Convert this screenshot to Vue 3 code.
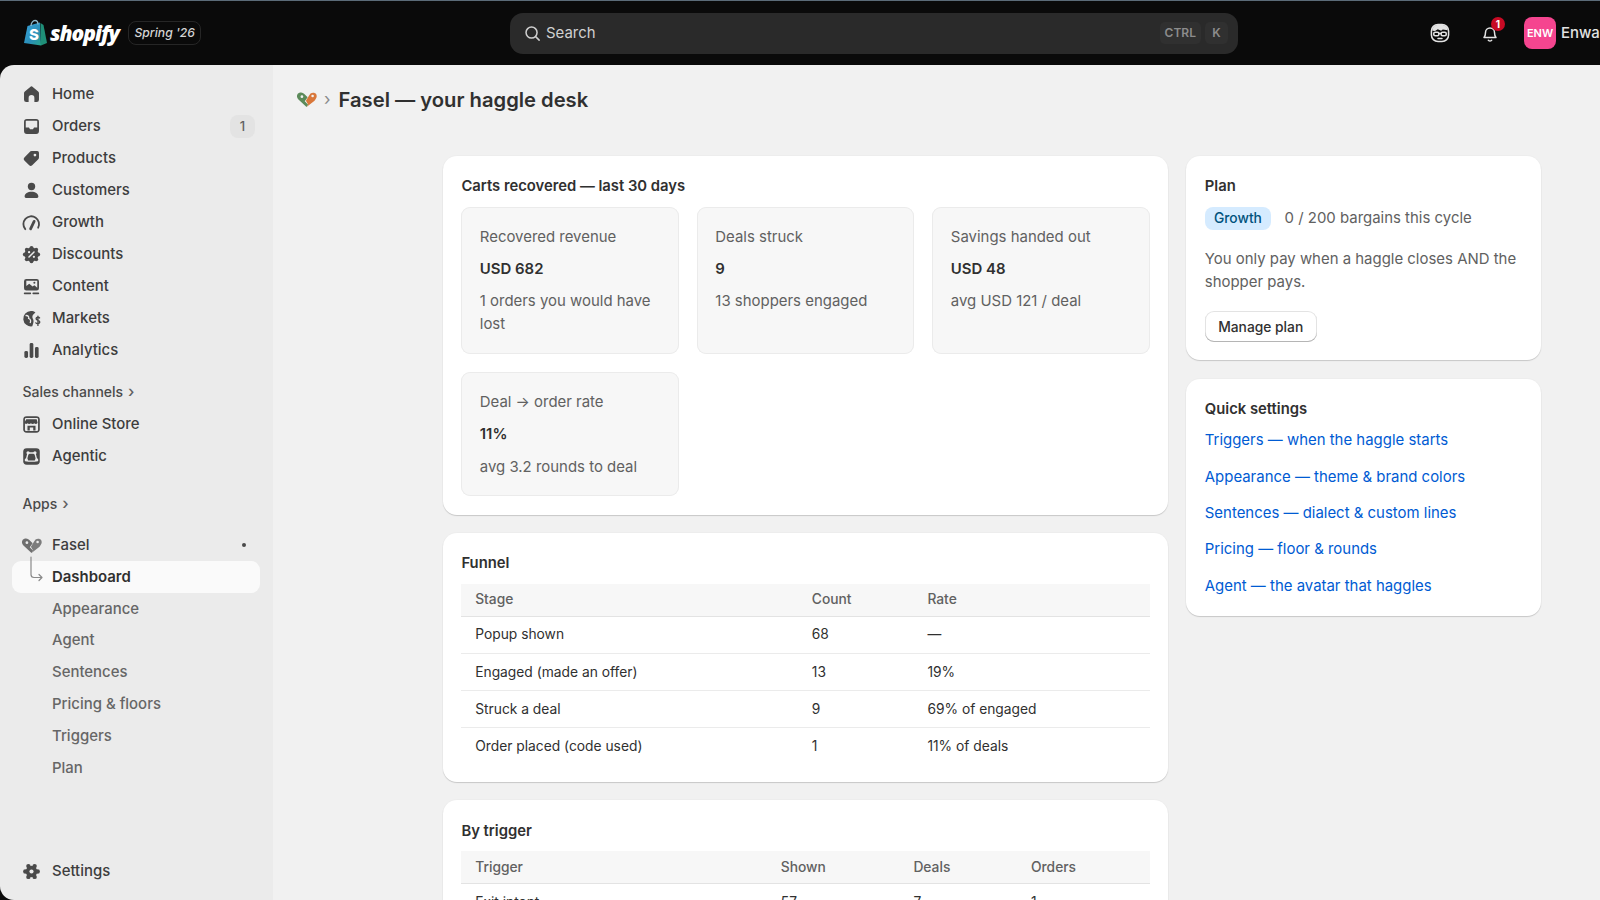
<template>
  <div class="admin">
    <!-- top bar -->
    <header class="topbar">
      <div class="brand">
        <svg class="bag" viewBox="0 0 24 28">
          <defs>
            <linearGradient id="bagGrad" x1="0" y1="0" x2="1" y2="1">
              <stop offset="0" stop-color="#3aa3dc" />
              <stop offset="0.6" stop-color="#2a8fb8" />
              <stop offset="1" stop-color="#27a58a" />
            </linearGradient>
          </defs>
          <path d="M1 24 L4.500 7 L17 3.500 L18 26.500z" fill="url(#bagGrad)" />
          <path d="M17.500 4 L20.500 6 L24 24 L18 26.500z" fill="#1f8f78" />
          <path d="M8 7c0-3 2-5.500 4-5.500s3 2 3 4" fill="none" stroke="#8fb7c9" stroke-width="1.300" />
          <text x="6" y="21" class="bag-s">S</text>
        </svg>
        <span class="wordmark">shopify</span>
        <span class="edition">Spring '26</span>
      </div>
      <div class="search">
        <svg class="search-icon" viewBox="0 0 20 20">
          <circle cx="9" cy="9" r="5.800" />
          <path d="M13.300 13.300 L17 17" />
        </svg>
        <span class="search-text">Search</span>
        <span class="kbd">CTRL</span>
        <span class="kbd">K</span>
      </div>
      <div class="top-actions">
        <svg class="face" viewBox="0 0 20 20">
          <rect x="2.200" y="2.200" width="15.600" height="15.600" rx="6" />
          <path d="M3 8 C3 4 6 2.500 10 2.500 C14 2.500 17 4 17 7.500 L12.500 6.800 L11 8 L8 6.500 L5.500 8.200z" class="hair" />
          <rect x="4.300" y="9.300" width="4.700" height="3.200" rx="1.300" />
          <rect x="11" y="9.300" width="4.700" height="3.200" rx="1.300" />
          <path d="M9 10.500 h2 M8.200 15 h3.600" />
        </svg>
        <div class="bell-wrap">
          <svg class="bell" viewBox="0 0 20 20">
            <path d="M4 14.500 c1.200-1.300 1.500-2.500 1.500-5 a4.500 4.500 0 0 1 9 0 c0 2.500 .3 3.700 1.500 5z" />
            <path d="M8 16.800 a2.200 2.200 0 0 0 4 0" />
          </svg>
          <span class="bell-badge">1</span>
        </div>
        <span class="avatar">ENW</span>
        <span class="store-name">Enwar</span>
      </div>
    </header>

    <div class="shell">
      <!-- left nav -->
      <aside class="sidebar">
        <a v-for="item in mainNav" :key="item.label" class="nav-row">
          <svg class="nav-icon" viewBox="0 0 20 20" v-html="icons[item.icon]"></svg>
          <span class="nav-label">{{ item.label }}</span>
          <span v-if="item.count" class="nav-count">{{ item.count }}</span>
        </a>

        <div class="nav-heading first">Sales channels <span class="chev">›</span></div>
        <a v-for="item in channelNav" :key="item.label" class="nav-row">
          <svg class="nav-icon" viewBox="0 0 20 20" v-html="icons[item.icon]"></svg>
          <span class="nav-label">{{ item.label }}</span>
        </a>

        <div class="nav-heading second">Apps <span class="chev">›</span></div>
        <a class="nav-row app-row">
          <svg class="nav-icon" viewBox="0 0 20 20" v-html="heartGray"></svg>
          <span class="nav-label">Fasel</span>
          <span class="app-dot"></span>
        </a>
        <a class="nav-row selected">
          <svg class="nav-icon connector" viewBox="0 0 23 23">
            <path d="M11 -9 V8.500 a3 3 0 0 0 3 3 H22 M19 8.500 l3 3 -3 3" />
          </svg>
          <span class="nav-label">Dashboard</span>
        </a>
        <a v-for="label in appNav" :key="label" class="nav-row sub-row">
          <span class="nav-icon"></span>
          <span class="nav-label">{{ label }}</span>
        </a>

        <a class="nav-row settings">
          <svg class="nav-icon" viewBox="0 0 20 20" v-html="icons.settings"></svg>
          <span class="nav-label">Settings</span>
        </a>
      </aside>

      <main class="main">
        <div class="page-head">
          <svg class="head-logo" viewBox="0 0 20 20" v-html="heartColor"></svg>
          <span class="crumb">›</span>
          <h1>Fasel — your haggle desk</h1>
        </div>

        <div class="columns">
          <div class="col-main">
            <section class="card">
              <h2>Carts recovered — last 30 days</h2>
              <div class="stats">
                <div v-for="s in stats" :key="s.label" class="stat">
                  <div class="stat-label">{{ s.label }}</div>
                  <div class="stat-value">{{ s.value }}</div>
                  <div class="stat-label">{{ s.sub }}</div>
                </div>
              </div>
            </section>

            <section class="card">
              <h2>Funnel</h2>
              <table class="funnel">
                <thead>
                  <tr><th>Stage</th><th>Count</th><th>Rate</th></tr>
                </thead>
                <tbody>
                  <tr v-for="r in funnel" :key="r[0]">
                    <td v-for="c in r" :key="c">{{ c }}</td>
                  </tr>
                </tbody>
              </table>
            </section>

            <section class="card">
              <h2>By trigger</h2>
              <table class="triggers">
                <thead>
                  <tr><th>Trigger</th><th>Shown</th><th>Deals</th><th>Orders</th></tr>
                </thead>
                <tbody>
                  <tr><td>Exit intent</td><td>57</td><td>7</td><td>1</td></tr>
                  <tr><td>Idle on cart</td><td>11</td><td>2</td><td>0</td></tr>
                </tbody>
              </table>
            </section>
          </div>

          <div class="col-side">
            <section class="card">
              <h2>Plan</h2>
              <div class="plan-row">
                <span class="plan-badge">Growth</span>
                <span class="muted">0 / 200 bargains this cycle</span>
              </div>
              <p class="muted plan-note">You only pay when a haggle closes AND the shopper pays.</p>
              <button class="btn">Manage plan</button>
            </section>

            <section class="card">
              <h2>Quick settings</h2>
              <div class="links">
                <a v-for="l in quickLinks" :key="l" class="link">{{ l }}</a>
              </div>
            </section>
          </div>
        </div>
      </main>
    </div>
  </div>
</template>

<script setup>
// nav items
const mainNav = [
  { label: "Home", icon: "home" },
  { label: "Orders", icon: "orders", count: 1 },
  { label: "Products", icon: "products" },
  { label: "Customers", icon: "customers" },
  { label: "Growth", icon: "growth" },
  { label: "Discounts", icon: "discounts" },
  { label: "Content", icon: "content" },
  { label: "Markets", icon: "markets" },
  { label: "Analytics", icon: "analytics" },
];
const channelNav = [
  { label: "Online Store", icon: "store" },
  { label: "Agentic", icon: "agentic" },
];
const appNav = ["Appearance", "Agent", "Sentences", "Pricing & floors", "Triggers", "Plan"];

const stats = [
  { label: "Recovered revenue", value: "USD 682", sub: "1 orders you would have lost" },
  { label: "Deals struck", value: "9", sub: "13 shoppers engaged" },
  { label: "Savings handed out", value: "USD 48", sub: "avg USD 121 / deal" },
  { label: "Deal → order rate", value: "11%", sub: "avg 3.2 rounds to deal" },
];

const funnel = [
  ["Popup shown", "68", "—"],
  ["Engaged (made an offer)", "13", "19%"],
  ["Struck a deal", "9", "69% of engaged"],
  ["Order placed (code used)", "1", "11% of deals"],
];

const quickLinks = [
  "Triggers — when the haggle starts",
  "Appearance — theme & brand colors",
  "Sentences — dialect & custom lines",
  "Pricing — floor & rounds",
  "Agent — the avatar that haggles",
];

// small helper for the fasel mark, two tags making a heart
const heart = (left, right, hole) => `
  <path d="M10 16.500 L3 10 C1 8 1.500 5 3.800 4.200 C6 3.500 7.500 4.500 9 6 L11 8 L8.500 11.500 L11.500 14.500z" fill="${left}"/>
  <path d="M10 16.500 L11.500 14.500 L9.500 11 L12 7 L13.500 4.800 C15 3.800 17.500 3.800 18.500 5.500 C19.500 7.500 18.500 9 17 11z" fill="${right}"/>
  <circle cx="6" cy="7.500" r="1.200" fill="${hole}"/>
  <circle cx="15.300" cy="7" r="1.100" fill="${hole}"/>`;
const heartGray = heart("#6f6f6f", "#7c7c7c", "#ebebeb");
const heartColor = heart("#5c8a5a", "#d9773a", "#f1f1f1");

const ring = (n, dist, r) =>
  Array.from({ length: n }, (_, i) => {
    const a = (i * 2 * Math.PI) / n;
    return `<circle cx="${10 + dist * Math.cos(a)}" cy="${10 + dist * Math.sin(a)}" r="${r}"/>`;
  }).join("");

const icons = {
  home: `<path d="M8.900 3.400a1.700 1.700 0 0 1 2.200 0l4.700 3.900a2 2 0 0 1 .7 1.500v5.700a2 2 0 0 1-2 2h-2v-3.500a2.500 2.500 0 0 0-5 0v3.500h-2a2 2 0 0 1-2-2V8.800a2 2 0 0 1 .7-1.500z"/>`,
  orders: `<path fill-rule="evenodd" d="M6 3.500h8a2.500 2.500 0 0 1 2.500 2.500v8a2.500 2.500 0 0 1-2.500 2.500H6A2.500 2.500 0 0 1 3.500 14V6A2.500 2.500 0 0 1 6 3.500zM5.500 5h9a.5.5 0 0 1 .5.5v5.300h-2.800l-.9 1.500H8.700l-.9-1.500H5V5.500a.5.500 0 0 1 .5-.5z"/>`,
  products: `<path fill-rule="evenodd" d="M10.800 3.500h4.200a1.500 1.500 0 0 1 1.500 1.500v4.200a2 2 0 0 1-.6 1.400l-5.300 5.300a1.800 1.800 0 0 1-2.600 0l-4.200-4.200a1.800 1.800 0 0 1 0-2.600l5.300-5.300a2 2 0 0 1 1.700-.3zM13 5.800a1.200 1.200 0 1 0 0 2.400 1.200 1.200 0 0 0 0-2.400z"/>`,
  customers: `<circle cx="10" cy="6.500" r="3.200"/><path d="M4 15.300c0-2.900 2.800-4.300 6-4.300s6 1.400 6 4.300a1.200 1.200 0 0 1-1.200 1.200H5.200A1.200 1.200 0 0 1 4 15.300z"/>`,
  growth: `<path d="M4.600 15.800A6.800 6.800 0 1 1 15.800 14.500" fill="none" stroke="#4a4a4a" stroke-width="1.600" stroke-linecap="round"/><path d="M9.200 15.500 L12.300 9" stroke="#4a4a4a" stroke-width="2.400" stroke-linecap="round"/>`,
  discounts: `<circle cx="10" cy="10" r="6"/>${ring(8, 5.8, 1.7)}<path d="M7.800 12.200 L12.200 7.800" stroke="#ebebeb" stroke-width="1.300" stroke-linecap="round"/><circle cx="7.900" cy="8" r="1" fill="#ebebeb"/><circle cx="12.100" cy="12" r="1" fill="#ebebeb"/>`,
  content: `<path fill-rule="evenodd" d="M5.500 3.500h9a2 2 0 0 1 2 2v6a2 2 0 0 1-2 2h-9a2 2 0 0 1-2-2v-6a2 2 0 0 1 2-2zM5.500 5v4.500l2.500-2 3 2.500 1.500-1 2.500 2V5z"/><circle cx="12.500" cy="6.800" r=".9"/><path d="M4 16h5M11.500 16h4.500" fill="none" stroke="#4a4a4a" stroke-width="1.400" stroke-linecap="round"/>`,
  markets: `<path d="M9.500 3.500c1.500 0 2.800.4 3.900 1.200l-1.400 1.300c-1.700 1.600-1.400 3.200-.7 4.500.6 1.200.6 2.400.2 3.600l-.8 2.700a6.700 6.700 0 1 1-1.200-13.300z"/><path d="M4.800 7.500 C7 7 8 8.500 7.500 10 C9.500 10.500 9.500 12.500 8.800 14" fill="none" stroke="#ebebeb" stroke-width="1.100"/><path d="M17 9.500c-.6-.9-3-.9-3 .8 0 1.800 3.200 1 3.200 2.800 0 1.700-2.600 1.700-3.400.7M15.600 8v8" fill="none" stroke="#4a4a4a" stroke-width="1.200" stroke-linecap="round"/>`,
  analytics: `<rect x="3.800" y="10.500" width="3.200" height="6" rx="1.300"/><rect x="8.400" y="3.500" width="3.200" height="13" rx="1.300"/><rect x="13" y="7" width="3.200" height="9.500" rx="1.300"/>`,
  store: `<rect x="2.800" y="2.800" width="14.400" height="14.400" rx="3"/><rect x="4.300" y="4.300" width="11.400" height="11.400" rx="1" fill="#ebebeb"/><path d="M5.500 5.500h9l.8 3c-.5 1.300-2.200 1.300-2.800.4-.7.9-2.300.9-3 0-.7.9-2.300.9-3 0-.6.9-2.300.9-2.800-.4z"/><path d="M6.500 11h7v4.200h-2v-2.700h-3v2.700h-2z"/>`,
  agentic: `<rect x="2.800" y="2.800" width="14.400" height="14.400" rx="3"/><path d="M7 7h6l1.500 6-1.500 1H7l-1.500-1z" fill="none" stroke="#ebebeb" stroke-width="1.200"/><circle cx="7" cy="6.800" r="1.400" fill="#ebebeb"/><circle cx="13" cy="6.800" r="1.400" fill="#ebebeb"/><circle cx="5.500" cy="13" r="1.400" fill="#ebebeb"/><circle cx="14.500" cy="13" r="1.400" fill="#ebebeb"/>`,
  settings: `<circle cx="10" cy="10" r="5"/>${ring(6, 5.4, 1.900)}<circle cx="10" cy="10" r="1.800" fill="#ebebeb"/>`,
};
</script>

<style>
html, body {
  margin: 0;
  overflow: hidden;
  background: #0a0a0a;
}
</style>

<style scoped>
.admin {
  width: 1600px;
  height: 900px;
  overflow: hidden;
  font-family: Inter, "Noto Sans", sans-serif;
  font-size: 14.95px;
  line-height: 23px;
  color: #303030;
  background: #0a0a0a;
  display: flex;
  flex-direction: column;
}

/* top bar */
.topbar {
  flex: none;
  border-top: 1px solid #5b6b78;
  height: 64px;
  display: flex;
  align-items: center;
  white-space: nowrap;
}
.brand {
  width: 510px;
  flex: none;
  display: flex;
  align-items: center;
  box-sizing: border-box;
  padding-left: 23px;
}
.bag {
  width: 24px;
  height: 28px;
}
.bag-s {
  font-family: Inter, sans-serif;
  font-size: 15px;
  font-weight: 800;
  fill: #fff;
}
.wordmark {
  font-family: "Open Sans", sans-serif;
  font-style: italic;
  font-weight: 800;
  font-size: 21px;
  letter-spacing: -1px;
  color: #fff;
  margin-left: 3px;
}
.edition {
  margin-left: 9px;
  padding: 0 5.5px;
  height: 22px;
  line-height: 21px;
  border: 1px solid #262626;
  border-radius: 8px;
  font-size: 12.2px;
  font-style: italic;
  font-weight: 500;
  color: #d4d4d4;
}
.search {
  width: 728px;
  height: 41px;
  flex: none;
  background: #2a2a2a;
  border-radius: 13px;
  display: flex;
  align-items: center;
  box-sizing: border-box;
  padding: 0 10px 0 13px;
  color: #d0d0d0;
}
.search-icon {
  width: 19px;
  height: 19px;
  fill: none;
  stroke: #cfcfcf;
  stroke-width: 1.6;
  stroke-linecap: round;
}
.search-text {
  margin-left: 4px;
  flex: 1;
}
.kbd {
  height: 22px;
  line-height: 22px;
  padding: 0 5px;
  margin-left: 4px;
  min-width: 13px;
  text-align: center;
  background: #303030;
  border-radius: 5px;
  font-size: 12px;
  font-weight: 600;
  color: #8c8c8c;
}
.top-actions {
  display: flex;
  align-items: center;
  margin-left: 191px;
  flex: none;
}
.face {
  width: 22px;
  height: 22px;
  fill: none;
  stroke: #e3e3e3;
  stroke-width: 1.4;
  stroke-linecap: round;
}
.face .hair {
  fill: #e3e3e3;
  stroke: none;
}
.bell-wrap {
  position: relative;
  width: 20px;
  height: 20px;
  margin-left: 29px;
}
.bell {
  width: 20px;
  height: 20px;
  fill: none;
  stroke: #e3e3e3;
  stroke-width: 1.5;
  stroke-linejoin: round;
}
.bell-badge {
  position: absolute;
  left: 11px;
  top: -6px;
  width: 14px;
  height: 14px;
  border-radius: 50%;
  background: #c70a24;
  color: #fff;
  font-size: 10px;
  font-weight: 700;
  line-height: 14px;
  text-align: center;
}
.avatar {
  width: 32px;
  height: 32px;
  margin-left: 24px;
  border-radius: 8px;
  background: #f5458f;
  color: #fff;
  font-size: 11px;
  font-weight: 600;
  line-height: 32px;
  text-align: center;
}
.store-name {
  margin-left: 5px;
  font-weight: 500;
  color: #e3e3e3;
}

/* layout below the bar */
.shell {
  flex: 1;
  min-height: 0;
  display: flex;
}
.sidebar {
  width: 273px;
  flex: none;
  box-sizing: border-box;
  background: #ebebeb;
  border-radius: 14px 0 0 14px;
  padding: 14px 13px 13px 12px;
  display: flex;
  flex-direction: column;
}
.nav-row {
  height: 31.9px;
  flex: none;
  display: flex;
  align-items: center;
  padding-left: 7.5px;
  padding-right: 5px;
  font-weight: 500;
  color: #3d3d3d;
  border-radius: 9px;
}
.nav-icon {
  width: 23px;
  height: 23px;
  flex: none;
  fill: #4a4a4a;
  margin-right: 9.5px;
}
.nav-label {
  flex: 1;
}
.nav-count {
  width: 25px;
  height: 23px;
  border-radius: 8px;
  background: #e3e3e3;
  color: #616161;
  font-size: 13px;
  text-align: center;
}
.nav-heading {
  height: 32px;
  flex: none;
  display: flex;
  align-items: center;
  gap: 5px;
  padding-left: 10.5px;
  font-size: 14px;
  font-weight: 500;
  color: #4a4a4a;
}
.nav-heading.first {
  margin-top: 9px;
  margin-bottom: 2px;
}
.nav-heading.second {
  margin-top: 15px;
}
.chev {
  color: #616161;
  font-size: 16px;
}
.app-row {
  margin-top: 9.5px;
}
.app-dot {
  width: 4px;
  height: 4px;
  border-radius: 50%;
  background: #4a4a4a;
  margin-right: 9px;
}
.selected {
  background: #fafafa;
  font-weight: 600;
  color: #303030;
}
.connector {
  overflow: visible;
  fill: none;
  stroke: #8a8a8a;
  stroke-width: 1.2;
  stroke-linecap: round;
  stroke-linejoin: round;
}
.sub-row {
  font-weight: 450;
  color: #666;
}
.settings {
  margin-top: auto;
}

/* main area */
.main {
  flex: 1;
  min-width: 0;
  background: #f1f1f1;
}
.page-head {
  height: 68px;
  display: flex;
  align-items: center;
  padding-left: 22px;
}
.head-logo {
  width: 23px;
  height: 23px;
}
.crumb {
  margin: 0 8px 0 6px;
  color: #8a8a8a;
  font-size: 17px;
}
h1 {
  margin: 0;
  font-size: 20.2px;
  font-weight: 600;
  color: #303030;
}
.columns {
  margin: 23px 0 0 170px;
  display: flex;
  align-items: flex-start;
  gap: 18.4px;
}
.col-main {
  width: 725px;
  flex: none;
  display: flex;
  flex-direction: column;
  gap: 18.4px;
}
.col-side {
  width: 355px;
  flex: none;
  display: flex;
  flex-direction: column;
  gap: 18.4px;
}
.card {
  background: #fff;
  border-radius: 14px;
  padding: 18.4px;
  box-shadow: 0 1px 1px rgba(0, 0, 0, 0.16), 0 0 0 1px rgba(0, 0, 0, 0.015);
}
h2 {
  margin: 0 0 8.4px;
  padding-top: 0.8px;
  font-size: 14.8px;
  line-height: 23px;
  font-weight: 600;
  color: #303030;
}
.stats {
  display: grid;
  grid-template-columns: repeat(3, 1fr);
  gap: 18.4px;
}
.stat {
  background: #f7f7f7;
  border-radius: 9px;
  padding: 19px 18.4px 17.8px;
  box-shadow: inset 0 0 0 1px #ebebeb;
  display: flex;
  flex-direction: column;
  gap: 9.2px;
}
.stat-label {
  color: #616161;
}
.stat-value {
  font-weight: 600;
  color: #303030;
}

/* tables */
table {
  width: 100%;
  border-collapse: collapse;
  table-layout: fixed;
  margin-bottom: -1px;
  font-size: 13.8px;
}
th {
  text-align: left;
  font-weight: 500;
  color: #616161;
  background: #f7f7f7;
  padding: 4.6px 13.8px;
  border-bottom: 1px solid #e3e3e3;
}
td {
  padding: 6.6px 13.8px;
  border-bottom: 1px solid #ebebeb;
  color: #303030;
}
tbody tr:last-child td {
  border-bottom: none;
}
.funnel th:nth-child(1) {
  width: 309px;
}
.funnel th:nth-child(2) {
  width: 88px;
}
.triggers th:nth-child(1) {
  width: 278px;
}
.triggers th:nth-child(2) {
  width: 105px;
}
.triggers th:nth-child(3) {
  width: 90px;
}

/* side column */
.plan-row {
  display: flex;
  align-items: center;
  gap: 13.5px;
}
.plan-badge {
  height: 23px;
  padding: 0 9.2px;
  border-radius: 8px;
  background: #d5ebff;
  color: #00527c;
  font-size: 13.8px;
  font-weight: 550;
}
.muted {
  color: #616161;
}
.plan-note {
  margin: 18.4px 0 17.4px;
}
.btn {
  display: block;
  height: 30.6px;
  padding: 0 13.4px;
  border: none;
  border-radius: 9px;
  background: #fff;
  box-shadow: inset 0 -1px 0 #b5b5b5, inset 0 0 0 1px #e3e3e3;
  font-family: inherit;
  font-size: 13.8px;
  font-weight: 550;
  color: #303030;
}
.links {
  display: flex;
  flex-direction: column;
  gap: 13.3px;
}
.link {
  color: #005bd3;
}
</style>
